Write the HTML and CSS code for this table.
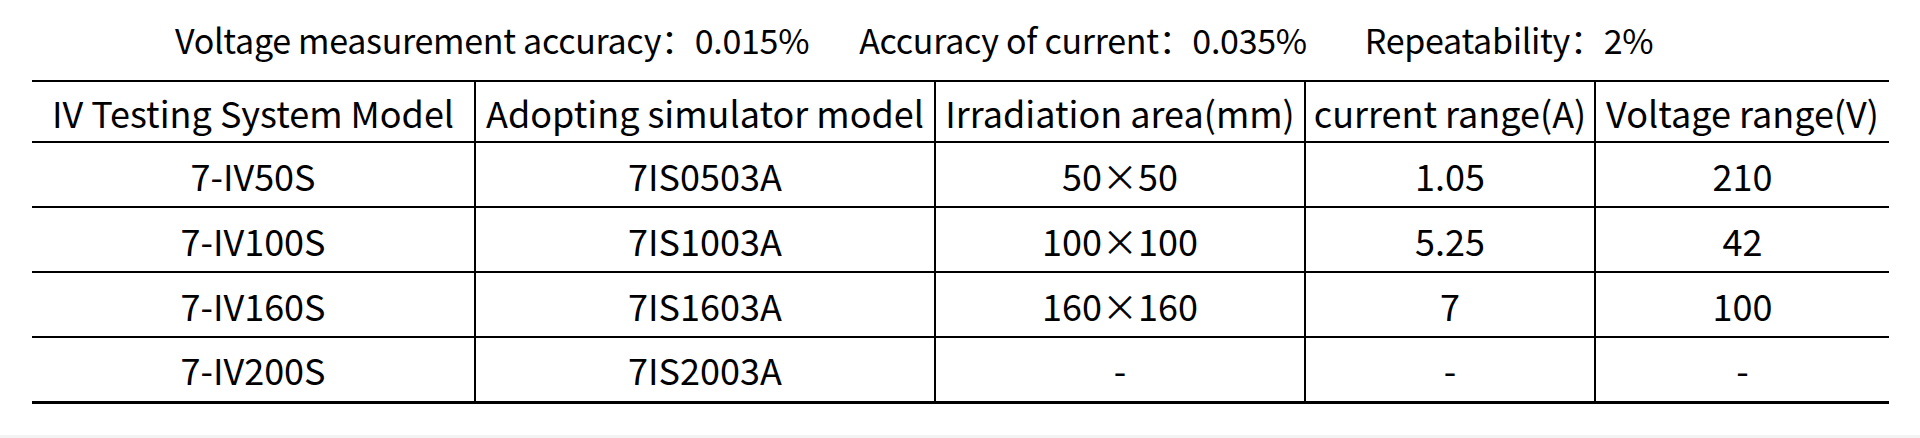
FILE: index.html
```html
<!DOCTYPE html>
<html lang="en">
<head>
    <meta charset="UTF-8">
    <meta name="viewport" content="width=device-width, initial-scale=1.0">
    <title>IV Testing System</title>
    <link rel="stylesheet" href="styles.css">
</head>
<body>

    <div class="summary">
        <span class="item">Voltage measurement accuracy：0.015%</span>
        <span class="item item-current">Accuracy of current：0.035%</span>
        <span class="item item-repeat">Repeatability：2%</span>
    </div>

    <table class="spec">
        <colgroup>
            <col class="c1">
            <col class="c2">
            <col class="c3">
            <col class="c4">
            <col class="c5">
        </colgroup>
        <thead>
            <tr>
                <th>IV Testing System Model</th>
                <th>Adopting simulator model</th>
                <th>Irradiation area(mm)</th>
                <th>current range(A)</th>
                <th>Voltage range(V)</th>
            </tr>
        </thead>
        <tbody>
            <tr>
                <td>7-IV50S</td>
                <td>7IS0503A</td>
                <td>50×50</td>
                <td>1.05</td>
                <td>210</td>
            </tr>
            <tr>
                <td>7-IV100S</td>
                <td>7IS1003A</td>
                <td>100×100</td>
                <td>5.25</td>
                <td>42</td>
            </tr>
            <tr>
                <td>7-IV160S</td>
                <td>7IS1603A</td>
                <td>160×160</td>
                <td>7</td>
                <td>100</td>
            </tr>
            <tr>
                <td>7-IV200S</td>
                <td>7IS2003A</td>
                <td>-</td>
                <td>-</td>
                <td>-</td>
            </tr>
        </tbody>
    </table>

    <div class="footer-strip"></div>

</body>
</html>
```

FILE: styles.css
```css
/* Sayfa genel */
body {
    font-family: "Noto Sans CJK SC", "Noto Sans", sans-serif;
    color: #000;
    background-color: #fff;
    margin: 0;
    padding: 0;
}

/* Üst bilgi satırı */
.summary {
    display: flex;
    align-items: center;
    height: 75px;
    padding-top: 2px;
    padding-left: 175px;
    margin-bottom: 3px;
    font-size: 34px;
    letter-spacing: -0.3px;
}

.summary .item-current {
    margin-left: 50px;
}

.summary .item-repeat {
    margin-left: 58px;
}

/* Tablo */
.spec {
    width: 1857px;
    margin-left: 32px;
    border-collapse: collapse;
    table-layout: fixed;
    font-size: 36px;
}

.spec .c1 { width: 443px; }
.spec .c2 { width: 460px; }
.spec .c3 { width: 370px; }
.spec .c4 { width: 290px; }
.spec .c5 { width: 294px; }

.spec th,
.spec td {
    padding: 0;
    text-align: center;
    vertical-align: middle;
    font-weight: normal;
    white-space: nowrap;
    border-top: 2px solid #000;
    border-bottom: 2px solid #000;
    border-left: 2px solid #000;
}

.spec th:first-child,
.spec td:first-child {
    border-left: none;
}

.spec thead tr {
    height: 61px;
}

.spec tbody tr {
    height: 65px;
}

.spec tbody tr:last-child td {
    border-bottom: 3px solid #000;
}

/* Alt gri şerit */
.footer-strip {
    height: 8px;
    margin-top: 31px;
    background-color: #f3f3f3;
}
```
